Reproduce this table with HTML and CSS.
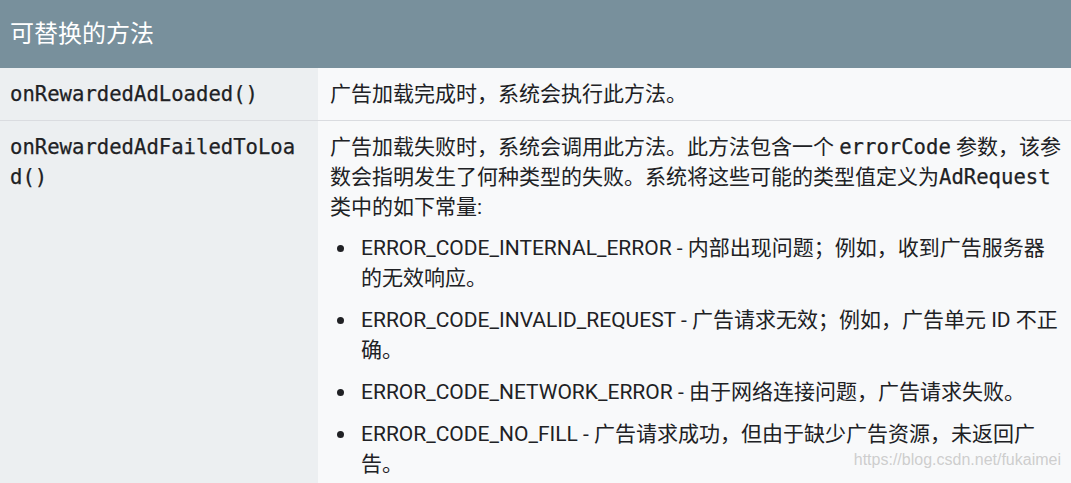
FILE: index.html
```html
<!DOCTYPE html>
<html lang="zh-CN">
<head>
<meta charset="utf-8">
<link rel="stylesheet" href="styles.css">
</head>
<body>
<table class="methods">
  <colgroup>
    <col class="col-name">
    <col class="col-desc">
  </colgroup>
  <thead>
    <tr><th colspan="2">可替换的方法</th></tr>
  </thead>
  <tbody>
    <tr>
      <td class="name"><code>onRewardedAdLoaded()</code></td>
      <td class="desc">广告加载完成时，系统会执行此方法。</td>
    </tr>
    <tr>
      <td class="name"><code>onRewardedAdFailedToLoad()</code></td>
      <td class="desc">
        <p>广告加载失败时，系统会调用此方法。此方法包含一个 <code>errorCode</code> 参数，该参数会指明发生了何种类型的失败。系统将这些可能的类型值定义为<code>AdRequest</code> 类中的如下常量:</p>
        <ul>
          <li>ERROR_CODE_INTERNAL_ERROR - 内部出现问题；例如，收到广告服务器的无效响应。</li>
          <li>ERROR_CODE_INVALID_REQUEST - 广告请求无效；例如，广告单元 ID 不正确。</li>
          <li>ERROR_CODE_NETWORK_ERROR - 由于网络连接问题，广告请求失败。</li>
          <li>ERROR_CODE_NO_FILL - 广告请求成功，但由于缺少广告资源，未返回广告。</li>
        </ul>
      </td>
    </tr>
  </tbody>
</table>
<div class="watermark">https://blog.csdn.net/fukaimei</div>
</body>
</html>
```
FILE: styles.css
```css
html, body {
  margin: 0;
  padding: 0;
  background: #f8f9fa;
  overflow: hidden;
}
body {
  font-family: Roboto, "Noto Sans CJK SC", sans-serif;
  font-size: 21px;
  line-height: 30px;
  color: #202124;
  width: 1071px;
  height: 483px;
  position: relative;
}
.methods {
  border-collapse: collapse;
  width: 1071px;
  table-layout: fixed;
}
.col-name {
  width: 318px;
}
.methods th {
  background: #78909c;
  color: #fff;
  font-weight: 400;
  font-size: 24px;
  text-align: left;
  height: 68px;
  padding: 0 10px 4px;
  box-sizing: border-box;
  font-family: "Noto Sans CJK SC", sans-serif;
}
.methods td {
  vertical-align: top;
  padding: 11px 8px 11px 12px;
  border-bottom: 1px solid #dadce0;
}
.methods td.name {
  background: #eceff1;
  padding-left: 10px;
  padding-right: 12px;
  word-break: break-all;
}
.methods td.desc {
  background: #f8f9fa;
}
code {
  font-family: "DejaVu Sans Mono", monospace;
  font-size: 20.6px;
  font-weight: 500;
  color: #202124;
  -webkit-text-stroke: 0.25px #202124;
}
p {
  margin: 0 0 11px;
}
ul {
  margin: 0;
  padding-left: 31px;
  list-style: none;
}
li {
  margin-bottom: 12px;
  position: relative;
}
li::before {
  content: "";
  position: absolute;
  left: -24px;
  top: 12px;
  width: 7px;
  height: 7px;
  border-radius: 50%;
  background: #202124;
}
.watermark {
  position: absolute;
  right: 10px;
  bottom: 8px;
  font-family: "Liberation Sans", sans-serif;
  font-size: 16px;
  color: rgba(200, 200, 200, 0.9);
}
```
